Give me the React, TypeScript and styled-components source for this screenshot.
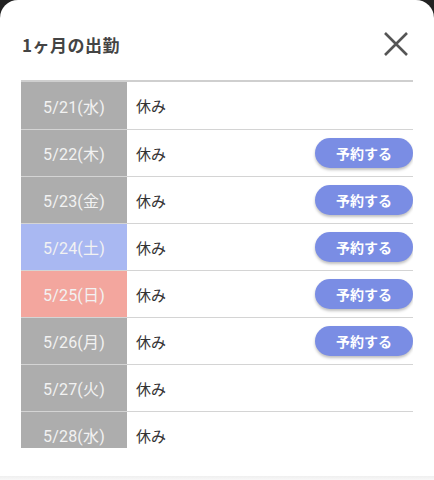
import React from "react";
import styled, { createGlobalStyle } from "styled-components";

const Global = createGlobalStyle`
  html, body { margin: 0; padding: 0; background: #222; }
  body { font-family: "Noto Sans CJK JP", "Noto Sans", sans-serif; }
  * { box-sizing: border-box; }
`;

const Modal = styled.div`
  width: 434px;
  height: 480px;
  background: #fff;
  border-radius: 18px 18px 0 0;
  display: flex;
  flex-direction: column;
  overflow: hidden;
`;

const Header = styled.div`
  height: 80px;
  padding: 0 22px 0 22px;
  display: flex;
  align-items: center;
  justify-content: space-between;
  padding-top: 8px;
`;

const Title = styled.h2`
  margin: 0;
  font-size: 17px;
  font-weight: 700;
  color: #444;
  letter-spacing: 0.5px;
`;

const CloseBtn = styled.button`
  border: 0;
  background: none;
  padding: 0;
  width: 28px;
  height: 28px;
  margin-right: 2px;
  display: flex;
  align-items: center;
  justify-content: center;
  cursor: pointer;
`;

const List = styled.div`
  margin: 0 21px;
  height: 368px;
  overflow: hidden;
  border-top: 2px solid #cfcfcf;
  flex: none;
`;

const Row = styled.div<{ $first?: boolean }>`
  display: flex;
  align-items: stretch;
  height: ${(p) => (p.$first ? 48 : 47)}px;
  border-bottom: 1px solid #d4d4d4;
`;

const DateCell = styled.div<{ $bg: string }>`
  width: 106px;
  flex: none;
  background: ${(p) => p.$bg};
  color: #f2f2f2;
  font-family: "Roboto", "Noto Sans CJK JP", sans-serif;
  font-size: 16px;
  display: flex;
  align-items: center;
  justify-content: center;
  letter-spacing: 0.2px;
`;

const Status = styled.div`
  flex: 1;
  display: flex;
  align-items: center;
  padding-left: 9px;
  font-size: 15px;
  color: #333;
`;

const ReserveBtn = styled.button`
  align-self: center;
  width: 98px;
  height: 30px;
  border: 0;
  border-radius: 15px;
  background: #7a8de4;
  color: #fff;
  font-family: inherit;
  font-size: 14px;
  font-weight: 700;
  box-shadow: 0 2px 3px rgba(0, 0, 0, 0.25);
  cursor: pointer;
`;

const Spacer = styled.div`
  flex: 1;
`;

const Footer = styled.div`
  height: 4px;
  background: linear-gradient(#efefef, #f8f8f8);
`;

const days = [
  { d: "5/21(水)", bg: "#adadad", btn: false },
  { d: "5/22(木)", bg: "#adadad", btn: true },
  { d: "5/23(金)", bg: "#adadad", btn: true },
  { d: "5/24(土)", bg: "#a9b8f2", btn: true },
  { d: "5/25(日)", bg: "#f3a69e", btn: true },
  { d: "5/26(月)", bg: "#adadad", btn: true },
  { d: "5/27(火)", bg: "#adadad", btn: false },
  { d: "5/28(水)", bg: "#adadad", btn: false },
];

export default function App() {
  return (
    <>
      <Global />
      <Modal>
        <Header>
          <Title>1ヶ月の出勤</Title>
          <CloseBtn aria-label="close">
            <svg width="26" height="26" viewBox="0 0 26 26">
              <path d="M2 2 L24 24 M24 2 L2 24" stroke="#555" strokeWidth="2.6" strokeLinecap="butt" />
            </svg>
          </CloseBtn>
        </Header>
        <List>
          {days.map((x, i) => (
            <Row key={x.d} $first={i === 0}>
              <DateCell $bg={x.bg}>{x.d}</DateCell>
              <Status>休み</Status>
              {x.btn && <ReserveBtn>予約する</ReserveBtn>}
            </Row>
          ))}
        </List>
        <Spacer />
        <Footer />
      </Modal>
    </>
  );
}
